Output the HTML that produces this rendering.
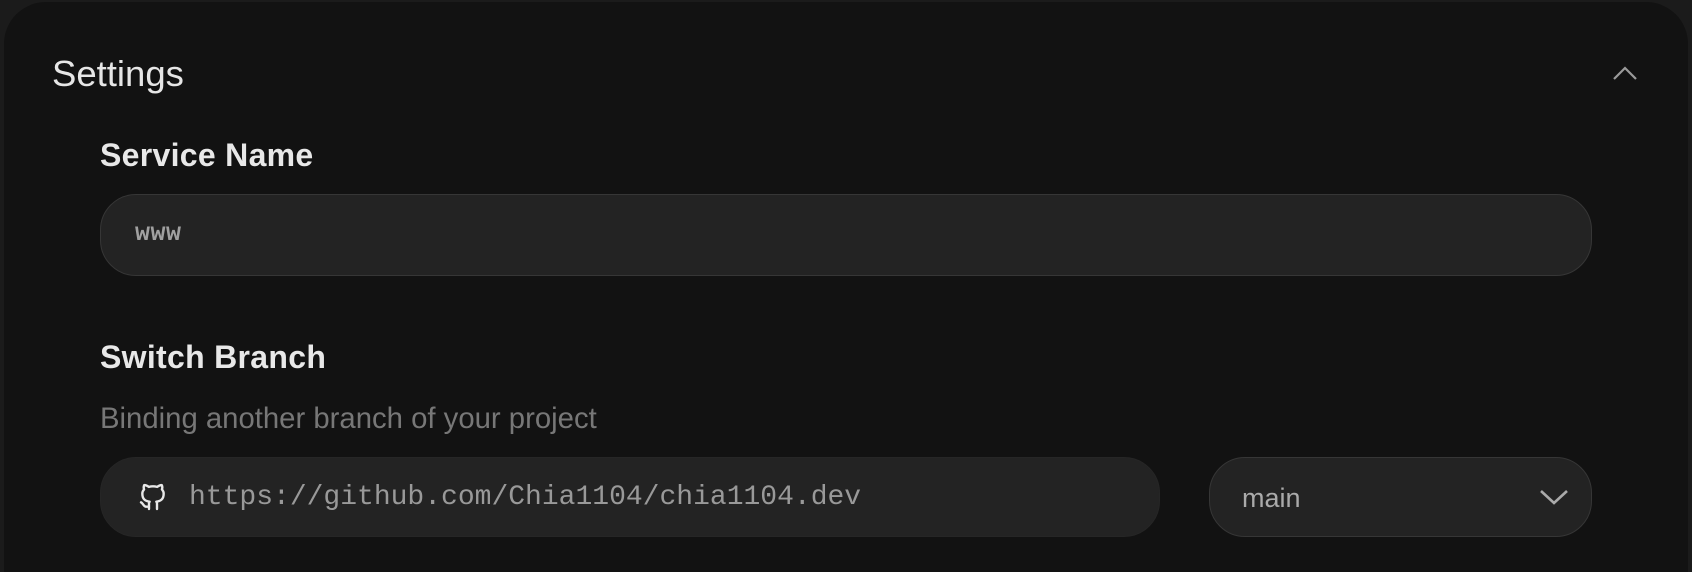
<!DOCTYPE html>
<html><head><meta charset="utf-8"><style>
html,body{margin:0;padding:0;width:1692px;height:572px;overflow:hidden;background:#1b1b1b;font-family:"Liberation Sans",sans-serif;}
.card{position:absolute;left:4px;top:2px;width:1684px;height:570px;background:#121212;border-radius:42px 42px 0 0;}
.abs{position:absolute;white-space:nowrap;}
.title{left:52px;top:53px;font-size:36.5px;color:#e6e6e6;line-height:42px;}
.lbl{font-size:32px;font-weight:bold;color:#e8e8e8;line-height:38px;left:100px;letter-spacing:0.3px}
.box{position:absolute;background:#232323;border:1.5px solid #363636;box-sizing:border-box;border-radius:36px;}
.mono{font-family:"Liberation Mono",monospace;color:#999;}
</style></head><body>
<div class="card"></div>
<div class="abs title">Settings</div>
<svg class="abs" style="left:1612px;top:64px" width="26" height="18" viewBox="0 0 26 18"><path d="M2 15 L13 4 L24 15" fill="none" stroke="#9a9a9a" stroke-width="2.2"/></svg>
<div class="abs lbl" style="top:136px">Service Name</div>
<div class="box" style="left:100px;top:194px;width:1492px;height:82px"></div>
<div class="abs mono" style="left:135px;top:219px;font-size:25px;line-height:30px;letter-spacing:0.5px;color:#a0a0a0;font-weight:bold">www</div>
<div class="abs lbl" style="top:338px">Switch Branch</div>
<div class="abs" style="left:100px;top:402px;font-size:29.3px;color:#777;line-height:34px">Binding another branch of your project</div>
<div class="box" style="left:100px;top:457px;width:1060px;height:80px;border-color:#262626"></div>
<svg class="abs" style="left:137px;top:480px" width="32" height="34" viewBox="0 0 24 24"><path d="M9 19c-4.3 1.4-4.3-2.5-6-3m12 5v-3.5c0-1 .1-1.4-.5-2 2.8-.3 5.5-1.4 5.5-6a4.6 4.6 0 0 0-1.3-3.2 4.2 4.2 0 0 0-.1-3.2s-1.1-.3-3.5 1.3a12.3 12.3 0 0 0-6.2 0C6.5 2.8 5.4 3.1 5.4 3.1a4.2 4.2 0 0 0-.1 3.2A4.6 4.6 0 0 0 4 9.5c0 4.6 2.7 5.7 5.5 6-.6.6-.6 1.2-.5 2V21" fill="none" stroke="#e8e8e8" stroke-width="1.8" stroke-linecap="round" stroke-linejoin="round"/></svg>
<div class="abs mono" style="left:189px;top:481px;font-size:28px;line-height:34px;letter-spacing:0px">https://github.com/Chia1104/chia1104.dev</div>
<div class="box" style="left:1209px;top:457px;width:383px;height:80px"></div>
<div class="abs" style="left:1242px;top:482px;font-size:27px;color:#aaa;line-height:32px">main</div>
<svg class="abs" style="left:1538px;top:487px" width="32" height="20" viewBox="0 0 32 20"><path d="M3 4 L16 16 L29 4" fill="none" stroke="#aaa" stroke-width="2.6"/></svg>
</body></html>
